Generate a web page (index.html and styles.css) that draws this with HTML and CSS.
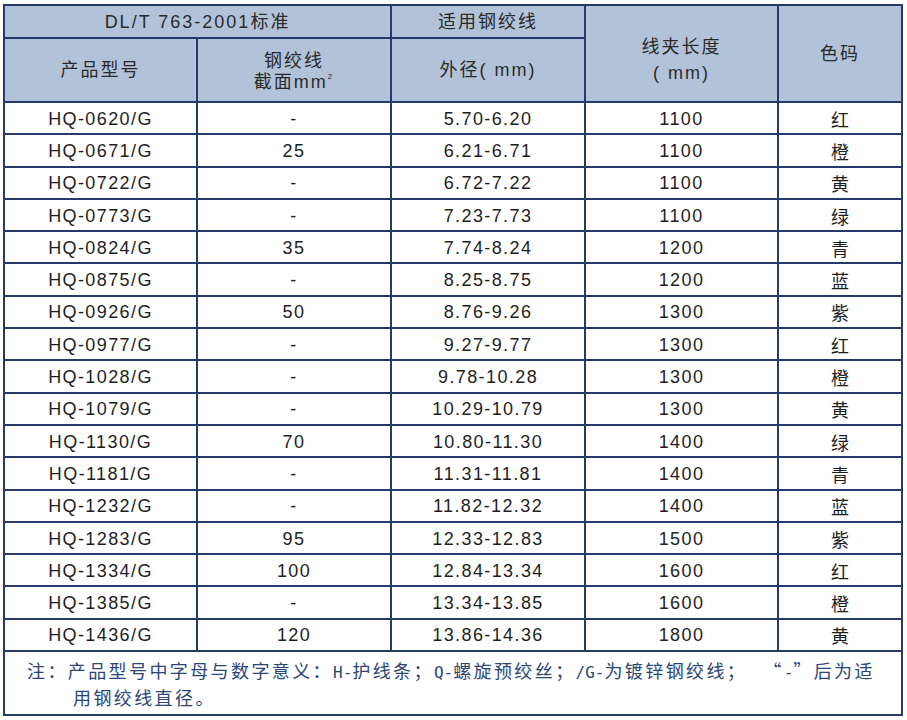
FILE: index.html
```html
<!DOCTYPE html>
<html lang="zh">
<head>
<meta charset="utf-8">
<title>DL/T 763-2001</title>
<link rel="stylesheet" href="styles.css">
</head>
<body>
<table class="spec">
  <colgroup>
    <col class="c1"><col class="c2"><col class="c3"><col class="c4"><col class="c5">
  </colgroup>
  <thead>
    <tr class="h1">
      <th colspan="2">DL/T 763-2001标准</th>
      <th>适用钢绞线</th>
      <th rowspan="2" class="len">线夹长度<br>( mm)</th>
      <th rowspan="2">色码</th>
    </tr>
    <tr class="h2">
      <th>产品型号</th>
      <th class="sec">钢绞线<br>截面mm<sup>2</sup></th>
      <th>外径( mm)</th>
    </tr>
  </thead>
  <tbody>
    <tr><td>HQ-0620/G</td><td>-</td><td>5.70-6.20</td><td>1100</td><td class="cn">红</td></tr>
    <tr><td>HQ-0671/G</td><td>25</td><td>6.21-6.71</td><td>1100</td><td class="cn">橙</td></tr>
    <tr><td>HQ-0722/G</td><td>-</td><td>6.72-7.22</td><td>1100</td><td class="cn">黄</td></tr>
    <tr><td>HQ-0773/G</td><td>-</td><td>7.23-7.73</td><td>1100</td><td class="cn">绿</td></tr>
    <tr><td>HQ-0824/G</td><td>35</td><td>7.74-8.24</td><td>1200</td><td class="cn">青</td></tr>
    <tr><td>HQ-0875/G</td><td>-</td><td>8.25-8.75</td><td>1200</td><td class="cn">蓝</td></tr>
    <tr><td>HQ-0926/G</td><td>50</td><td>8.76-9.26</td><td>1300</td><td class="cn">紫</td></tr>
    <tr><td>HQ-0977/G</td><td>-</td><td>9.27-9.77</td><td>1300</td><td class="cn">红</td></tr>
    <tr><td>HQ-1028/G</td><td>-</td><td>9.78-10.28</td><td>1300</td><td class="cn">橙</td></tr>
    <tr><td>HQ-1079/G</td><td>-</td><td>10.29-10.79</td><td>1300</td><td class="cn">黄</td></tr>
    <tr><td>HQ-1130/G</td><td>70</td><td>10.80-11.30</td><td>1400</td><td class="cn">绿</td></tr>
    <tr><td>HQ-1181/G</td><td>-</td><td>11.31-11.81</td><td>1400</td><td class="cn">青</td></tr>
    <tr><td>HQ-1232/G</td><td>-</td><td>11.82-12.32</td><td>1400</td><td class="cn">蓝</td></tr>
    <tr><td>HQ-1283/G</td><td>95</td><td>12.33-12.83</td><td>1500</td><td class="cn">紫</td></tr>
    <tr><td>HQ-1334/G</td><td>100</td><td>12.84-13.34</td><td>1600</td><td class="cn">红</td></tr>
    <tr><td>HQ-1385/G</td><td>-</td><td>13.34-13.85</td><td>1600</td><td class="cn">橙</td></tr>
    <tr><td>HQ-1436/G</td><td>120</td><td>13.86-14.36</td><td>1800</td><td class="cn">黄</td></tr>
    <tr class="note"><td colspan="5">注：产品型号中字母与数字意义：<span class="lat">H-</span>护线条；<span class="lat">Q-</span>螺旋预绞丝；<span class="lat">/G-</span>为镀锌钢绞线；<span class="gap"></span>“<span class="lat">-</span>”后为适<br>用钢绞线直径。</td></tr>
  </tbody>
</table>
</body>
</html>
```

FILE: styles.css
```css
html, body {
  margin: 0;
  padding: 0;
  background: #ffffff;
}

body {
  padding: 4px 0 0 3px;
}

.spec {
  border-collapse: collapse;
  width: 898px;
  table-layout: fixed;
  border: 2px solid #253a69;
  font-family: "Liberation Sans", "Noto Sans CJK SC", sans-serif;
  font-size: 18px;
  color: #1e1e1e;
}

.c1 { width: 193px; }
.c2 { width: 194px; }
.c3 { width: 194px; }
.c4 { width: 193px; }
.c5 { width: 124px; }

.spec th,
.spec td {
  border: 2px solid #253a69;
  padding: 0;
  text-align: center;
  vertical-align: middle;
}

.spec th {
  background: #b2c3d9;
  font-weight: normal;
  color: #2a2a2a;
  font-family: "Liberation Sans", "Noto Sans CJK SC", sans-serif;
  letter-spacing: 2px;
  line-height: 22px;
}

.h1 { height: 33px; }
.h2 { height: 64px; }

.spec th.len {
  line-height: 26px;
  padding-top: 12px;
}

.spec th.sec {
  line-height: 21px;
  padding-top: 4px;
}

.spec sup {
  font-size: 8px;
  vertical-align: 9px;
  line-height: 0;
}

.spec tbody tr { height: 32.3px; }

.spec td {
  letter-spacing: 1.4px;
  line-height: 20px;
  padding-top: 1px;
}

.spec td.cn {
  font-family: "Noto Sans CJK SC", sans-serif;
  letter-spacing: 0;
}

.spec tr.note { height: 64px; }

.spec tr.note td {
  text-align: left;
  white-space: nowrap;
  font-family: "Noto Sans CJK SC", sans-serif;
  color: #2b4576;
  font-size: 18px;
  letter-spacing: 2.4px;
  line-height: 25px;
  padding: 6px 10px 4px 68px;
  text-indent: -46px;
}

.spec tr.note .lat {
  font-family: "DejaVu Sans Mono", "Liberation Mono", monospace;
  font-size: 16px;
  letter-spacing: 0;
}

.spec tr.note .gap {
  display: inline-block;
  width: 16px;
}
```
